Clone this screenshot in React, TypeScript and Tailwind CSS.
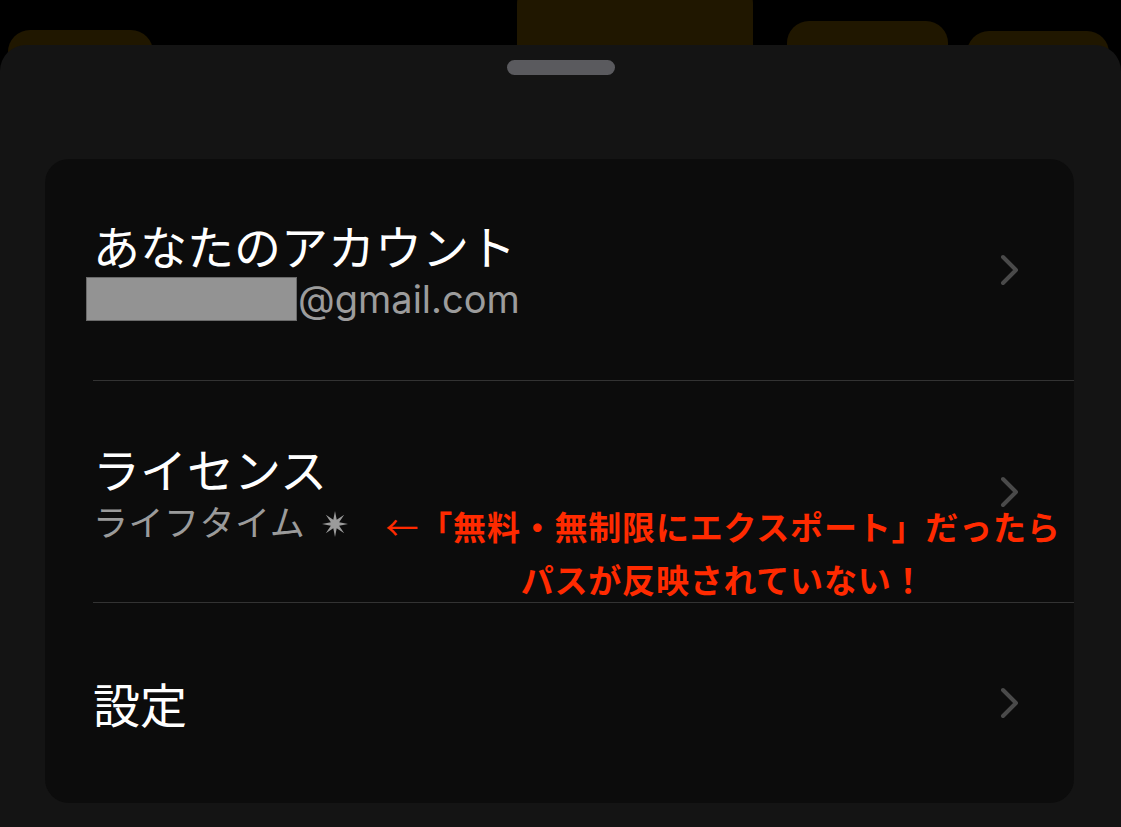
import React from "react";

const jp = { fontFamily: '"Noto Sans CJK JP", "Noto Sans", sans-serif' };
const latin = { fontFamily: 'Inter, "Noto Sans CJK JP", sans-serif' };

function Chevron() {
  return (
    <svg width="24" height="36" viewBox="0 0 24 36" className="shrink-0">
      <polyline
        points="5,5 18,18 5,31"
        fill="none"
        stroke="#4a4a4a"
        strokeWidth="4"
        strokeLinecap="round"
        strokeLinejoin="round"
      />
    </svg>
  );
}

function Star() {
  const pts: string[] = [];
  for (let i = 0; i < 16; i++) {
    const a = (Math.PI * 2 * i) / 16 - Math.PI / 2;
    const r = i % 2 === 0 ? 13 : 4.5;
    pts.push(`${14 + r * Math.cos(a)},${14 + r * Math.sin(a)}`);
  }
  return (
    <svg width="28" height="28" viewBox="0 0 28 28" className="inline-block ml-[16px] -mt-[4px] align-middle">
      <polygon points={pts.join(" ")} fill="#9b9b9b" />
    </svg>
  );
}

export default function App() {
  return (
    <div className="w-[1121px] h-[827px] bg-black overflow-hidden relative" style={jp}>
      {/* background tabs */}
      <div className="absolute left-[8px] top-[30px] w-[145px] h-[60px] rounded-[22px] bg-[#201700]" />
      <div className="absolute left-[517px] -top-[20px] w-[236px] h-[100px] rounded-[24px] bg-[#201700]" />
      <div className="absolute left-[787px] top-[21px] w-[161px] h-[60px] rounded-[22px] bg-[#201700]" />
      <div className="absolute left-[967px] top-[31px] w-[142px] h-[60px] rounded-[22px] bg-[#201700]" />

      {/* sheet */}
      <div className="absolute left-0 right-0 top-[45px] bottom-0 bg-[#141414] rounded-t-[26px] flex flex-col">
        <div className="mt-[15px] mx-auto w-[108px] h-[15px] rounded-full bg-[#5a5a5e]" />

        <div className="mt-[84px] ml-[45px] w-[1029px] h-[644px] bg-[#0c0c0c] rounded-[24px] flex flex-col overflow-hidden">
          {/* row 1 */}
          <div className="h-[221px] flex items-center pl-[41px] pr-[52px]">
            <div className="flex-1 flex flex-col">
              <div className="text-white text-[47px] leading-[52px] pl-[7px]">あなたのアカウント</div>
              <div className="flex items-center mt-[6px]">
                <div className="w-[211px] h-[44px] bg-[#939393] border border-[#6a6a6a]" />
                <span className="text-[#9c9c9c] text-[38px] leading-[44px] ml-[1px]" style={latin}>
                  @gmail.com
                </span>
              </div>
            </div>
            <Chevron />
          </div>
          <div className="ml-[48px] h-px bg-[#333333]" />

          {/* row 2 */}
          <div className="h-[221px] flex items-center pl-[48px] pr-[52px] relative">
            <div className="flex-1 flex flex-col">
              <div className="text-white text-[47px] leading-[52px]">ライセンス</div>
              <div className="text-[#9b9b9b] text-[35px] leading-[42px] mt-[6px] tracking-[0.5px]">
                ライフタイム
                <Star />
              </div>
            </div>
            <Chevron />
            <div className="absolute left-[332px] top-[119px] w-[692px] text-center text-[#ff2a00] font-bold text-[33px] leading-[53px] tracking-[0.8px]">
              <div>
                <span className="font-normal">←</span>「無料・無制限にエクスポート」だったら
              </div>
              <div>パスが反映されていない！</div>
            </div>
          </div>
          <div className="ml-[48px] h-px bg-[#333333]" />

          {/* row 3 */}
          <div className="flex-1 flex items-center pl-[48px] pr-[52px]">
            <div className="flex-1 text-white text-[47px] leading-[52px]">設定</div>
            <Chevron />
          </div>
        </div>
      </div>
    </div>
  );
}
